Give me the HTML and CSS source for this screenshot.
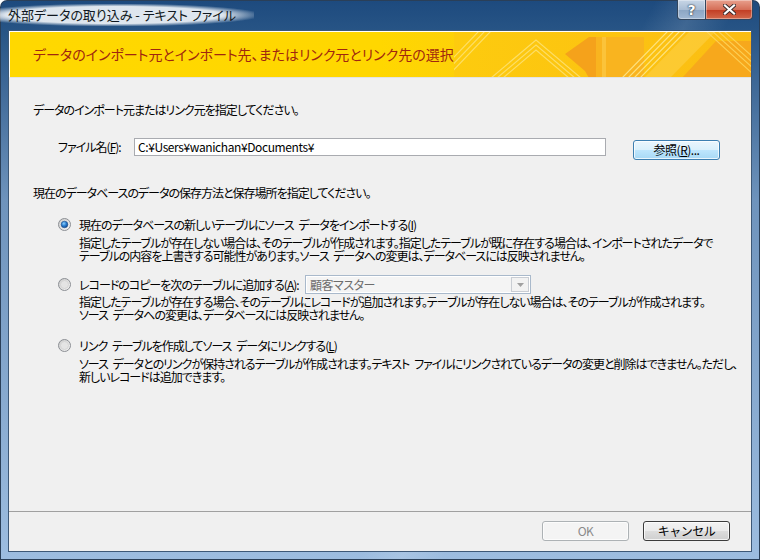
FILE: index.html
```html
<!DOCTYPE html>
<html lang="ja">
<head>
  <meta charset="UTF-8">
  <title>外部データの取り込み - テキスト ファイル</title>
  <link rel="stylesheet" href="styles.css">
</head>
<body>
  <div class="window">
    <!-- Title bar -->
    <div class="titlebar">
      <div class="caption">外部データの取り込み - テキスト ファイル</div>
      <div class="caption-buttons">
        <span class="cap-btn cap-help">?</span>
        <span class="cap-btn cap-close">
          <svg width="13" height="11" viewBox="0 0 13 11">
            <path d="M2 1.5 L11 9.5 M11 1.5 L2 9.5" stroke="#3a2a2a" stroke-width="4" stroke-linecap="square"/>
            <path d="M2 1.5 L11 9.5 M11 1.5 L2 9.5" stroke="#fff" stroke-width="2.2" stroke-linecap="square"/>
          </svg>
        </span>
      </div>
    </div>

    <div class="client">
      <!-- Yellow header -->
      <div class="banner">
        <h1 class="banner-title">データのインポート元とインポート先、またはリンク元とリンク先の選択</h1>
        <svg class="banner-art" width="300" height="47" viewBox="0 0 300 47">
          <defs>
            <linearGradient id="gold" x1="0" y1="0" x2="1" y2="0">
              <stop offset="0" stop-color="#fdcb0e"/>
              <stop offset="1" stop-color="#fbbd14"/>
            </linearGradient>
          </defs>
          <rect width="300" height="47" fill="url(#gold)"/>
          <g stroke="#fde47a" stroke-width="1.2" opacity="0.8" fill="none">
            <path d="M-20 47 L25 0 M-14 47 L31 0 M-8 47 L37 0"/>
            <path d="M37 47 L82 9 L127 47 M43 47 L82 14 L121 47 M49 47 L82 19 L115 47"/>
          </g>
          <polygon points="111,23 135,6 142,6 142,47 135,47 131,40" fill="#f5a21b"/>
          <rect x="142" y="6" width="48" height="41" fill="#f9b41f"/>
          <rect x="148" y="6" width="4" height="41" fill="#fbc33a"/>
          <polygon points="190,47 236,0 262,0 216,47" fill="#fccc3a" opacity="0.8"/>
          <g stroke="#fde58a" stroke-width="1.2" fill="none" opacity="0.9">
            <path d="M168 47 L214 0 M174 47 L220 0 M180 47 L226 0 M186 47 L232 0"/>
          </g>
          <polygon points="228,47 262,10 300,10 300,47" fill="#f7a81c"/>
          <g stroke="#fdd35a" stroke-width="1.2" fill="none" opacity="0.9">
            <path d="M252 0 L300 44 M258 0 L300 38 M264 0 L300 33 M270 0 L300 27"/>
          </g>
        </svg>
      </div>

      <div class="body">
        <p class="lead">データのインポート元またはリンク元を指定してください。</p>

        <div class="file-row">
          <label class="file-label">ファイル名(<u>F</u>):</label>
          <div class="textbox">C:¥Users¥wanichan¥Documents¥</div>
          <button class="btn btn-default">参照(<u>R</u>)...</button>
        </div>

        <p class="lead lead-2">現在のデータベースのデータの保存方法と保存場所を指定してください。</p>

        <div class="option option-1">
          <div class="option-head">
            <svg class="radio" width="13" height="13" viewBox="0 0 13 13">
              <defs>
                <linearGradient id="ring" x1="0" y1="0" x2="1" y2="1">
                  <stop offset="0" stop-color="#c9c9c9"/>
                  <stop offset="1" stop-color="#f7f7f7"/>
                </linearGradient>
                <radialGradient id="dot" cx="0.4" cy="0.35" r="0.7">
                  <stop offset="0" stop-color="#8fd0fb"/>
                  <stop offset="0.5" stop-color="#2a7fd2"/>
                  <stop offset="1" stop-color="#0c3f86"/>
                </radialGradient>
              </defs>
              <circle cx="6.5" cy="6.5" r="6" fill="url(#ring)" stroke="#8c8f94"/>
              <circle cx="6.5" cy="6.5" r="3.3" fill="url(#dot)" stroke="#1d4f8c" stroke-width="0.6"/>
            </svg>
            <span>現在のデータベースの新しいテーブルにソース データをインポートする(<u>I</u>)</span>
          </div>
          <p class="option-desc">指定したテーブルが存在しない場合は、そのテーブルが作成されます。指定したテーブルが既に存在する場合は、インポートされたデータで<br>テーブルの内容を上書きする可能性があります。ソース データへの変更は、データベースには反映されません。</p>
        </div>

        <div class="option option-2">
          <div class="option-head">
            <svg class="radio" width="13" height="13" viewBox="0 0 13 13">
              <circle cx="6.5" cy="6.5" r="6" fill="url(#ring)" stroke="#8c8f94"/>
              <circle cx="6.5" cy="6.5" r="4" fill="#e4e4e4" stroke="#d2d2d2" stroke-width="0.8"/>
            </svg>
            <span class="append-label">レコードのコピーを次のテーブルに追加する(<u>A</u>):</span>
            <div class="combo">
              <span class="combo-text">顧客マスター</span>
              <span class="combo-arrow">
                <svg width="7" height="4" viewBox="0 0 7 4"><path d="M0 0 H7 L3.5 4 Z" fill="#a0a0a0"/></svg>
              </span>
            </div>
          </div>
          <p class="option-desc">指定したテーブルが存在する場合、そのテーブルにレコードが追加されます。テーブルが存在しない場合は、そのテーブルが作成されます。<br>ソース データへの変更は、データベースには反映されません。</p>
        </div>

        <div class="option option-3">
          <div class="option-head">
            <svg class="radio" width="13" height="13" viewBox="0 0 13 13">
              <circle cx="6.5" cy="6.5" r="6" fill="url(#ring)" stroke="#8c8f94"/>
              <circle cx="6.5" cy="6.5" r="4" fill="#e4e4e4" stroke="#d2d2d2" stroke-width="0.8"/>
            </svg>
            <span>リンク テーブルを作成してソース データにリンクする(<u>L</u>)</span>
          </div>
          <p class="option-desc">ソース データとのリンクが保持されるテーブルが作成されます。テキスト ファイルにリンクされているデータの変更と削除はできません。ただし、<br>新しいレコードは追加できます。</p>
        </div>
      </div>

      <div class="footer">
        <button class="btn" disabled>OK</button>
        <button class="btn btn-cancel">キャンセル</button>
      </div>
    </div>
  </div>
</body>
</html>
```

FILE: styles.css
```css
body {
  margin: 0;
  background: #fff;
  font-family: "Noto Sans CJK JP", "Noto Sans", sans-serif;
  font-feature-settings: "palt";
}

.window {
  width: 760px;
  height: 560px;
  box-sizing: border-box;
  display: flex;
  flex-direction: column;
  border-radius: 7px 7px 0 0;
  background:
    linear-gradient(118deg, rgba(255,255,255,0) 62%, rgba(255,255,255,0.12) 66%, rgba(255,255,255,0) 70%),
    linear-gradient(180deg, #1d4a7e 0, #275485 30px, #6e93bc 200px, #9dbde0 560px);
  box-shadow: inset 0 0 0 1px #2a3f58;
}

/* Title bar */
.titlebar {
  height: 30px;
  display: flex;
  justify-content: space-between;
  align-items: flex-start;
}

.caption {
  margin: 4px 0 0 0;
  padding: 3px 18px 4px 8px;
  font-size: 13px;
  line-height: 15px;
  color: #101820;
  background: radial-gradient(ellipse at 45% 50%, rgba(232,238,244,0.95) 55%, rgba(232,238,244,0) 75%);
}

.caption-buttons {
  display: flex;
  margin-right: 7px;
}

.cap-btn {
  height: 19px;
  display: flex;
  align-items: center;
  justify-content: center;
  border: 1px solid #32465e;
  border-top: none;
  box-shadow: inset 0 0 0 1px rgba(255,255,255,0.35);
}

.cap-help {
  width: 27px;
  border-radius: 0 0 0 4px;
  background: linear-gradient(#c8d6e6 0%, #a9bdd4 50%, #8ba5c3 51%, #9fb7d3 100%);
  color: #fff;
  font: bold 14px "DejaVu Sans", sans-serif;
  text-shadow: 0 0 2px #1a2a3a, 0 0 1px #1a2a3a;
}

.cap-close {
  width: 46px;
  border-left: none;
  border-radius: 0 0 4px 0;
  background: linear-gradient(#e8a08d 0%, #d56f58 50%, #c23c22 51%, #d2684b 100%);
}

/* Client area */
.client {
  flex: 1;
  margin: 0 8px 8px;
  display: flex;
  flex-direction: column;
  background: #f0f0f0;
  border: 1px solid #3d5877;
  font-size: 12px;
  letter-spacing: -1px;
  word-spacing: 3px;
  color: #000;
}

.banner {
  height: 47px;
  box-sizing: border-box;
  padding-bottom: 2px;
  display: flex;
  align-items: center;
  border-top: 1px solid #fff;
  border-left: 1px solid #fff;
  border-bottom: 1px solid #e3e3e3;
  background: linear-gradient(90deg, #ffd800 0%, #ffd700 50%, #fdd00a 62%, #fdcb0e 100%);
  overflow: hidden;
}

.banner-title {
  margin: 0 0 0 23px;
  font-size: 14px;
  font-weight: normal;
  letter-spacing: 0;
  word-spacing: 0;
  color: #a0260f;
  white-space: nowrap;
}

.banner-art {
  flex: none;
  margin: 0 0 -2px auto;
}

.body {
  flex: 1;
  padding: 24px 0 0 24px;
}

.lead {
  margin: 0;
  line-height: 16px;
  white-space: nowrap;
}

.lead-2 {
  margin-top: 25px;
}

.file-row {
  display: flex;
  align-items: flex-start;
  margin-top: 20px;
  padding-left: 25px;
}

.file-label {
  width: 76px;
  line-height: 18px;
}

.textbox {
  width: 472px;
  height: 18px;
  box-sizing: border-box;
  padding: 0 3px;
  line-height: 16px;
  background: #fff;
  border: 1px solid #a9abb0;
  white-space: nowrap;
  letter-spacing: -0.4px;
}

.btn {
  width: 87px;
  height: 20px;
  padding: 0;
  font-family: inherit;
  font-size: 12px;
  line-height: 18px;
  letter-spacing: -0.5px;
  color: #000;
  border: 1px solid #707070;
  border-radius: 3px;
  background: linear-gradient(#f2f2f2 0%, #ebebeb 50%, #dddddd 51%, #cfcfcf 100%);
  box-shadow: inset 0 0 0 1px rgba(255,255,255,0.75);
}

.btn-default {
  margin: 2px 0 0 27px;
  border-color: #3c7fb1;
  background: linear-gradient(#eaf6fd 0%, #d9f0fc 50%, #bee6fd 51%, #a7d9f5 100%);
}

.btn:disabled {
  color: #8a8a8a;
  border-color: #adb2b5;
  background: #f4f4f4;
}

.btn-cancel {
  border-color: #3c3c3c;
}

/* Options */
.option-1 { margin-top: 15px; }
.option-2 { margin-top: 13px; }
.option-3 { margin-top: 16px; }

.option-head {
  display: flex;
  align-items: center;
  min-height: 16px;
  padding-left: 25px;
  white-space: nowrap;
}

.radio {
  flex: none;
  margin-right: 8px;
}

.option-desc {
  margin: 3px 0 0 46px;
  line-height: 13px;
  white-space: nowrap;
}

.option-2 .option-desc {
  margin-top: 1px;
}

.append-label {
  width: 226px;
}

.combo {
  width: 226px;
  height: 19px;
  box-sizing: border-box;
  display: flex;
  align-items: center;
  justify-content: space-between;
  border: 1px solid #a9b9cb;
  box-shadow: inset 0 0 0 1px #fff;
  background: #f4f4f4;
}

.combo-text {
  padding-left: 4px;
  color: #6d6d6d;
  letter-spacing: -0.5px;
}

.combo-arrow {
  width: 16px;
  height: 13px;
  margin-right: 1px;
  display: flex;
  align-items: center;
  justify-content: center;
  border: 1px solid #c9cdd3;
  background: #f2f2f2;
}

/* Footer buttons */
.footer {
  display: flex;
  justify-content: flex-end;
  gap: 14px;
  padding: 9px 21px 10px;
  border-top: 1px solid #a0a0a0;
}
```
